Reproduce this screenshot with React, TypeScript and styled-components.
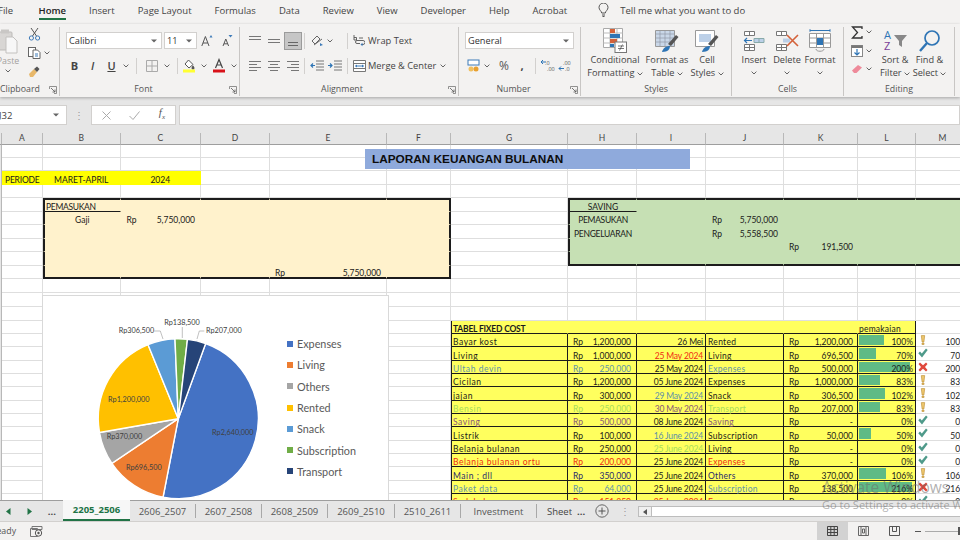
import React from "react"
import styled, { createGlobalStyle } from "styled-components"

const GlobalStyle = createGlobalStyle`
    html, body {
        margin: 0;
        padding: 0;
        background: #f3f2f1;
    }
`

const UI_FONT = `"Open Sans", "Noto Sans", sans-serif`
const CELL_FONT = `Lato, "Open Sans", sans-serif`

/* ---------- icons ---------- */

const Caret = () => (
    <svg width="6" height="4" viewBox="0 0 6 4">
        <path d="M.6.6 3 3 5.4.6" fill="none" stroke="#555" strokeWidth=".9" />
    </svg>
)

const SelectCaret = () => (
    <svg width="6" height="4" viewBox="0 0 6 4">
        <path d="M0 .5h6L3 3.5z" fill="#666" />
    </svg>
)

const Launcher = () => (
    <LauncherBox>
        <svg width="8" height="8" viewBox="0 0 8 8">
            <path d="M.5 3V.5h7v7H5" fill="none" stroke="#777" strokeWidth=".8" />
            <path d="M2 2 6 6M6 3.500V6H3.500" fill="none" stroke="#555" strokeWidth=".8" />
        </svg>
    </LauncherBox>
)

const Lines = ({ rows, active }: { rows: [number, number, number][]; active?: boolean }) => (
    <svg width="14" height="12" viewBox="0 0 14 12">
        {rows.map(([x, y, w], i) => (
            <rect key={i} x={x} y={y} width={w} height="1" fill={active ? "#666" : "#777"} />
        ))}
    </svg>
)

const PasteIcon = () => (
    <svg width="22" height="26" viewBox="0 0 22 26">
        <rect x="1" y="4" width="14" height="18" rx="1" fill="#d8d6d4" stroke="#bdbbb9" />
        <rect x="4" y="1.500" width="8" height="4" fill="#c9c7c5" />
        <path d="M9 9h7l4 4v12H9z" fill="#f7f7f7" stroke="#c3c1bf" />
    </svg>
)

const CutIcon = () => (
    <svg width="13" height="14" viewBox="0 0 13 14">
        <path d="M3 1 8.500 9M10 1 4.500 9" stroke="#555" strokeWidth="1" fill="none" />
        <circle cx="3.400" cy="11" r="2.100" fill="none" stroke="#3d7ab8" />
        <circle cx="9.600" cy="11" r="2.100" fill="none" stroke="#3d7ab8" />
    </svg>
)

const CopyIcon = () => (
    <svg width="13" height="12" viewBox="0 0 13 12">
        <rect x=".5" y=".5" width="7" height="9" fill="#fff" stroke="#666" />
        <path d="M5 3h4.500L12 5.500v6H5z" fill="#fff" stroke="#666" />
        <path d="M7 7h3M7 9h3" stroke="#3d7ab8" />
    </svg>
)

const PainterIcon = () => (
    <svg width="13" height="12" viewBox="0 0 13 12">
        <path d="M1 9 6 4l3 3-4 5H2z" fill="#e8b86a" />
        <path d="M6 4 9 1.500 11.500 4 9 7z" fill="#555" />
    </svg>
)

const BordersIcon = () => (
    <svg width="12" height="12" viewBox="0 0 12 12">
        <path d="M.5.5h11v11H.5zM6 .5v11M.5 6h11" fill="none" stroke="#aaa" />
    </svg>
)

const FillIcon = () => (
    <svg width="14" height="15" viewBox="0 0 14 15">
        <path d="M3 6 6.500 2 11 6.500 7 10z" fill="#fff" stroke="#555" />
        <path d="M11 7.500s1.500 1.500 1.500 2.400a1.500 1.500 0 0 1-3 0c0-.9 1.500-2.400 1.500-2.400" fill="#555" />
        <rect x="1" y="11.500" width="12" height="3" fill="#ffff33" />
    </svg>
)

const FontColorIcon = () => (
    <svg width="14" height="15" viewBox="0 0 14 15">
        <path d="M3.500 10 7 1.500 10.500 10M5 7h4" fill="none" stroke="#444" strokeWidth="1.200" />
        <rect x="1" y="11.500" width="12" height="3" fill="#d8121a" />
    </svg>
)

const GrowIcon = ({ small }: { small?: boolean }) => (
    <svg width="12" height="13" viewBox="0 0 12 13">
        <path
            d={small ? "M2 12 4.800 5l2.800 7M3 9.800h3.600" : "M.8 12 4.400 2.500 8 12M2 9h4.800"}
            fill="none"
            stroke="#555"
            strokeWidth="1"
        />
        <path d={small ? "M7.500 1h4L9.500 3.500z" : "M8.500 3.500h3L10 1z"} fill="#3d7ab8" />
    </svg>
)

const OrientIcon = () => (
    <svg width="14" height="13" viewBox="0 0 14 13">
        <path d="M2 7 7 2l3 3-5 5zM4 11l8-6" fill="none" stroke="#666" />
        <path d="M10 9l3 2-3 1z" fill="#3d7ab8" />
    </svg>
)

const WrapIcon = () => (
    <svg width="12" height="14" viewBox="0 0 12 14">
        <path d="M1 1v5M1 3.500h2.500v2.500H1M6 4h4M7 9.500H4a1.500 1.500 0 0 1 0-3h6a2 2 0 0 1 0 4H9" fill="none" stroke="#555" strokeWidth=".9" />
        <path d="M9.500 8.800v3.400L7.500 10.500z" fill="#3d7ab8" />
    </svg>
)

const MergeIcon = () => (
    <svg width="13" height="12" viewBox="0 0 13 12">
        <path d="M.5.5h12v11H.5zM.5 3.500h12M.5 8.500h12" fill="#fff" stroke="#777" />
        <path d="M2.500 6h8" stroke="#3d7ab8" />
        <path d="M2 6l2-1.500v3zM11 6 9 4.500v3z" fill="#3d7ab8" />
    </svg>
)

const IndentIcon = ({ out }: { out?: boolean }) => (
    <svg width="14" height="12" viewBox="0 0 14 12">
        <path d="M6 1h8M6 4h8M6 7h8M6 10h8" stroke="#777" />
        <path d={out ? "M5 5.500H1M3 3.500l-2 2 2 2" : "M0 5.500h4M2 3.500l2 2-2 2"} fill="none" stroke="#2f75b5" strokeWidth="1.200" />
    </svg>
)

const AccountingIcon = () => (
    <svg width="14" height="13" viewBox="0 0 14 13">
        <rect x="1" y="1" width="11" height="5" fill="#fff" stroke="#3d7ab8" />
        <circle cx="4" cy="10" r="2.500" fill="#f0c060" />
        <circle cx="9" cy="10" r="2.500" fill="#e8a030" />
    </svg>
)

const DecimalIcon = ({ less }: { less?: boolean }) => (
    <svg width="15" height="13" viewBox="0 0 15 13">
        <text x="5" y="5.500" fontSize="5.500" fontFamily="Open Sans" fill="#555">{less ? ".00" : ".0"}</text>
        <text x="7" y="12" fontSize="5.500" fontFamily="Open Sans" fill="#555">{less ? ".0" : ".00"}</text>
        <path d={less ? "M1 9.500h5M3 7.500l-2 2 2 2" : "M6 3H1M3 1 1 3l2 2"} fill="none" stroke="#2f75b5" />
    </svg>
)

const ConditionalIcon = () => (
    <svg width="24" height="25" viewBox="0 0 24 25">
        <path d="M.5.5h19v19H.5z" fill="#fff" stroke="#aaa" />
        <path d="M7 .5v19M14 .5v19M.5 5h19M.5 10h19M.5 15h19" stroke="#bbb" />
        <rect x="7" y="1" width="5" height="4" fill="#d4623a" />
        <rect x="7" y="6" width="10" height="4" fill="#2f75b5" />
        <rect x="7" y="11" width="7" height="4" fill="#d4623a" />
        <rect x="7" y="16" width="4" height="3" fill="#2f75b5" />
        <rect x="12" y="14" width="11.500" height="10.500" fill="#fff" stroke="#777" />
        <path d="M15 18h6M15 20.500h6M19.500 16.500 16.500 22.500" stroke="#555" strokeWidth=".8" fill="none" />
    </svg>
)

const TableStyleIcon = () => (
    <svg width="24" height="24" viewBox="0 0 24 24">
        <path d="M.5 1.500h19v16H.5z" fill="#c9d7e8" stroke="#999" />
        <path d="M.5 5h19M.5 9h19M.5 13h19M5 1.500v16M10 1.500v16M15 1.500v16" stroke="#8f9aa8" strokeWidth=".7" />
        <path d="M13 15 21 6l2.500 2-7.500 9z" fill="#555" />
        <path d="M7 23c1-4 4-6 8-6 0 3-2 6-8 6z" fill="#2f75b5" />
    </svg>
)

const CellStyleIcon = () => (
    <svg width="24" height="24" viewBox="0 0 24 24">
        <path d="M.5 1.500h19v16H.5z" fill="#fff" stroke="#999" />
        <rect x="4" y="5" width="12" height="8" fill="#bcd0e8" />
        <path d="M13 15 21 6l2.500 2-7.500 9z" fill="#555" />
        <path d="M7 23c1-4 4-6 8-6 0 3-2 6-8 6z" fill="#2f75b5" />
    </svg>
)

const InsertIcon = () => (
    <svg width="22" height="22" viewBox="0 0 22 22">
        <path d="M1.500 1.500h10v4h-10zM6.500 1.500v4M1.500 14.500h10v6h-10zM1.500 17.500h10M6.500 14.500v6" fill="#fff" stroke="#777" />
        <path d="M11 8.500h10v4H11zM16 8.500v4" fill="#bcd0e8" stroke="#8aa" />
        <path d="M1 10.500h8M4 8 1.500 10.500 4 13" fill="none" stroke="#2f75b5" strokeWidth="1.200" />
    </svg>
)

const DeleteIcon = () => (
    <svg width="24" height="22" viewBox="0 0 24 22">
        <path d="M1.500 1.500h10v4h-10zM6.500 1.500v4M1.500 14.500h10v6h-10zM1.500 17.500h10M6.500 14.500v6" fill="#fff" stroke="#777" />
        <rect x="8" y="8.500" width="7" height="4" fill="#bcd0e8" />
        <path d="M12 5 23 16M23 5 12 16" stroke="#d4623a" strokeWidth="1.600" />
    </svg>
)

const FormatIcon = () => (
    <svg width="22" height="24" viewBox="0 0 22 24">
        <path d="M.5 4.500h21v14H.5zM7.500 4.500v14M14.500 4.500v14M.5 9h21M.5 14h21" fill="#fff" stroke="#999" />
        <rect x="8" y="9" width="6" height="7" fill="#2f75b5" />
        <path d="M1 1.500h20M1 .2v2.600M21 .2v2.600" stroke="#2f75b5" />
        <path d="M7 20c0 3 8 3 8 0" fill="none" stroke="#999" />
    </svg>
)

const SigmaIcon = () => (
    <svg width="12" height="13" viewBox="0 0 12 13">
        <path d="M11 3V1H1.500L6.500 6.500 1.500 12H11v-2" fill="none" stroke="#333" strokeWidth="1.300" />
    </svg>
)

const FillDownIcon = () => (
    <svg width="12" height="12" viewBox="0 0 12 12">
        <rect x=".5" y=".5" width="11" height="11" fill="#fff" stroke="#888" />
        <rect x=".5" y=".5" width="11" height="2.500" fill="#777" />
        <path d="M6 4v6M3.500 7.500 6 10l2.500-2.500" fill="none" stroke="#2f75b5" strokeWidth="1.200" />
    </svg>
)

const EraserIcon = () => (
    <svg width="12" height="10" viewBox="0 0 12 10">
        <path d="M1 6.500 7 1l4 2.500-5.500 5.500H3z" fill="#ee8a9a" />
    </svg>
)

const SortIcon = () => (
    <svg width="25" height="24" viewBox="0 0 25 24">
        <text x="1" y="10" fontSize="11" fontFamily="Open Sans" fill="#2f75b5">A</text>
        <text x="1" y="21" fontSize="11" fontFamily="Open Sans" fill="#7a3f98">Z</text>
        <path d="M11 6h13l-5 6v6l-3-2v-4z" fill="#888" />
    </svg>
)

const FindIcon = () => (
    <svg width="23" height="24" viewBox="0 0 23 24">
        <circle cx="14" cy="9" r="7" fill="none" stroke="#2f75b5" strokeWidth="1.700" />
        <path d="M9 14 2 22" stroke="#2f75b5" strokeWidth="2.400" />
    </svg>
)

const BulbIcon = () => (
    <svg width="11" height="14" viewBox="0 0 11 14">
        <path d="M3.700 10C3.500 8 1 7 1 4.500a4.500 4.500 0 0 1 9 0C10 7 7.500 8 7.300 10zM4 12h3M4.500 13.500h2" fill="none" stroke="#555" />
    </svg>
)

const MacroIcon = () => (
    <svg width="13" height="11" viewBox="0 0 13 11">
        <path d="M.5 2.500h7v8h-7zM2 .5h10v3H2z" fill="#f3f2f1" stroke="#777" />
        <circle cx="8.500" cy="7" r="3.200" fill="#f3f2f1" stroke="#555" />
        <circle cx="8.500" cy="7" r="1.200" fill="#555" />
    </svg>
)

const StatusMark = ({ kind }: { kind: Mark }) => (
    <svg width="10" height="10" viewBox="0 0 10 10">
        {kind === "warn" && <path d="M3.300.6h3.400L5.900 7H4.100zM4 8h2v1.600H4z" fill="#eec76f" stroke="#b98a2e" strokeWidth=".6" />}
        {kind === "ok" && <path d="M.3 5.200 2 3.500l1.800 1.900L8 .6 9.700 2 4 9.400z" fill="#4f9a8a" />}
        {kind === "bad" && <path d="M.5 2 2 .5l3 2.700L8 .5 9.500 2 7 5l2.500 3L8 9.500 5 6.800 2 9.500.5 8 3 5z" fill="#e0483c" />}
    </svg>
)

/* ---------- data ---------- */

type Mark = "ok" | "warn" | "bad"

const BLUE = "#5f95a8"
const GREEN = "#a5dd5c"
const PURPLE = "#86557a"
const RED = "#f02a12"
const NAVY = "#2a2a6a"
const DATE_BLUE = "#5e8fa6"

const fixedCost: {
    name: string
    color?: string
    amount: string
    date: string
    dateColor?: string
    category: string
    spent: string
    pct: number
    bar: number
    mark: Mark
}[] = [
    { name: "Bayar kost", amount: "1,200,000", date: "26  Mei", category: "Rented", spent: "1,200,000", pct: 100, bar: 25, mark: "warn" },
    { name: "Living", amount: "1,000,000", date: "25 May 2024", dateColor: RED, category: "Living", spent: "696,500", pct: 70, bar: 17, mark: "ok" },
    { name: "Ultah devin", color: BLUE, amount: "250,000", date: "25 May 2024", category: "Expenses", spent: "500,000", pct: 200, bar: 51, mark: "bad" },
    { name: "Cicilan", amount: "1,200,000", date: "05 June 2024", category: "Expenses", spent: "1,000,000", pct: 83, bar: 21, mark: "warn" },
    { name: "jajan", amount: "300,000", date: "29 May 2024", dateColor: DATE_BLUE, category: "Snack", spent: "306,500", pct: 102, bar: 26, mark: "warn" },
    { name: "Bensin", color: GREEN, amount: "250,000", date: "30 May 2024", dateColor: PURPLE, category: "Transport", spent: "207,000", pct: 83, bar: 21, mark: "warn" },
    { name: "Saving", color: PURPLE, amount: "500,000", date: "08 June 2024", category: "Saving", spent: "-", pct: 0, bar: 0, mark: "ok" },
    { name: "Listrik", amount: "100,000", date: "16 June 2024", dateColor: DATE_BLUE, category: "Subscription", spent: "50,000", pct: 50, bar: 12, mark: "ok" },
    { name: "Belanja bulanan", amount: "250,000", date: "25 June 2024", dateColor: GREEN, category: "Living", spent: "-", pct: 0, bar: 0, mark: "ok" },
    { name: "Belanja bulanan ortu", color: RED, amount: "200,000", date: "25 June 2024", category: "Expenses", spent: "-", pct: 0, bar: 0, mark: "ok" },
    { name: "Main ; dll", color: NAVY, amount: "350,000", date: "25 June 2024", category: "Others", spent: "370,000", pct: 106, bar: 27, mark: "warn" },
    { name: "Paket data", color: BLUE, amount: "64,000", date: "25 June 2024", category: "Subscription", spent: "138,500", pct: 216, bar: 53, mark: "bad" },
    { name: "Sedekah", color: RED, amount: "151,350", date: "25 June 2024", dateColor: RED, category: "Expenses", spent: "-", pct: 0, bar: 0, mark: "ok" },
]

const pieData = [
    { name: "Expenses", value: 2640000, color: "#4472c4" },
    { name: "Living", value: 696500, color: "#ed7d31" },
    { name: "Others", value: 370000, color: "#a5a5a5" },
    { name: "Rented", value: 1200000, color: "#ffc000" },
    { name: "Snack", value: 306500, color: "#5b9bd5" },
    { name: "Subscription", value: 138500, color: "#70ad47" },
    { name: "Transport", value: 207000, color: "#264478" },
]

const pieLabels = [
    { text: "Rp2,640,000", x: 189.8, y: 136.7 },
    { text: "Rp696,500", x: 100.8, y: 172.3 },
    { text: "Rp370,000", x: 81.5, y: 141.3 },
    { text: "Rp1,200,000", x: 85.8, y: 104.3 },
    { text: "Rp306,500", x: 93.5, y: 34.7 },
    { text: "Rp138,500", x: 139, y: 26.7 },
    { text: "Rp207,000", x: 180.8, y: 34.7 },
]

const columns: [string, number][] = [
    ["", 2], ["A", 41], ["B", 77.5], ["C", 80.5], ["D", 69], ["E", 117], ["F", 64],
    ["G", 117], ["H", 69], ["I", 69], ["J", 78], ["K", 74], ["L", 58], ["M", 54],
]
const columnTemplate = columns.map(([, w]) => `${w}px`).join(" ")

const rowHeights = [
    13, ...Array(9).fill(13.44), 14, 14, 14, 13, ...Array(13).fill(13.33),
]

/* ---------- spreadsheet model ---------- */

interface CellSpec {
    text?: string
    rp?: string
    align?: "left" | "center" | "right"
    color?: string
    bold?: boolean
    fill?: string
    top?: string
    right?: string
    bottom?: string
    left?: string
    pad?: string
    spacing?: number
    bar?: number
    mark?: Mark
}

const THICK = "2px solid #1c1c1c"
const THIN = "1px solid #1c1c1c"
const NONE = "1px solid transparent"
const TABLE_YELLOW = "#ffff5e"

const buildCells = () => {
    const cells: Record<string, CellSpec> = {}
    const letters = columns.map(([c]) => c)
    const put = (key: string, spec: CellSpec) => {
        cells[key] = { ...cells[key], ...spec }
    }

    const box = (from: string, to: string, r0: number, r1: number, fill: string) => {
        const a = letters.indexOf(from)
        const b = letters.indexOf(to)
        for (let r = r0; r <= r1; r++) {
            for (let c = a; c <= b; c++) {
                put(`${letters[c]}${r}`, {
                    fill,
                    right: c === b ? THICK : NONE,
                    bottom: r === r1 ? THICK : NONE,
                    top: r === r0 ? THICK : undefined,
                    left: c === a ? THICK : undefined,
                })
            }
        }
    }

    for (const c of ["A", "B", "C"]) put(`${c}2`, { fill: "#ffff00", right: NONE, bottom: NONE })
    put("A2", { text: "PERIODE", pad: "0 0 0 3px", spacing: -0.2 })
    put("B2", { text: "MARET-APRIL", align: "center" })
    put("C2", { text: "2024", align: "center" })

    box("B", "F", 4, 9, "#fff2cc")
    put("B4", { text: "PEMASUKAN", bottom: THIN, pad: "0 0 0 1px", spacing: -0.3 })
    put("B5", { text: "Gaji", align: "center" })
    put("C5", { rp: "5,750,000", pad: "0 5px 0 6px" })
    put("E9", { rp: "5,750,000", pad: "0 5px 0 5px" })

    box("H", "M", 4, 8, "#c6e0b4")
    put("H4", { text: "SAVING", align: "center", bottom: THIN })
    put("H5", { text: "PEMASUKAN", align: "center", spacing: -0.3 })
    put("H6", { text: "PENGELUARAN", align: "center", spacing: -0.3 })
    put("J5", { rp: "5,750,000", pad: "0 5px 0 6px" })
    put("J6", { rp: "5,558,500", pad: "0 5px 0 6px" })
    put("K7", { rp: "191,500", pad: "0 4px 0 5px" })

    const head = { fill: TABLE_YELLOW, bottom: THIN, right: NONE }
    for (const c of ["G", "H", "I", "J", "K", "L"]) put(`${c}13`, head)
    put("G13", { text: "TABEL FIXED COST", bold: true, left: THIN, pad: "0 0 0 1px", spacing: -0.2 })
    put("L13", { text: "pemakaian", pad: "0 0 0 1px", spacing: 0.2 })
    put("L13", { right: THIN })

    fixedCost.forEach((row, i) => {
        const r = 14 + i
        const base = { fill: TABLE_YELLOW, bottom: THIN, right: THIN }
        put(`G${r}`, { ...base, left: THIN, text: row.name, color: row.color, pad: "0 0 0 1px", spacing: 0.55 })
        put(`H${r}`, { ...base, rp: row.amount, color: row.color, pad: "0 5px 0 5px" })
        put(`I${r}`, { ...base, text: row.date, color: row.dateColor, align: "right", pad: "0 2px 0 0", spacing: -0.15 })
        put(`J${r}`, { ...base, text: row.category, color: row.color, pad: "0 0 0 2px", spacing: 0.3 })
        put(`K${r}`, { ...base, rp: row.spent, pad: "0 4px 0 5px" })
        put(`L${r}`, { ...base, text: `${row.pct}%`, align: "right", pad: "0 2px 0 0", bar: row.bar })
        put(`M${r}`, { text: `${row.pct}%`, align: "right", mark: row.mark, pad: "0 2px 0 2px" })
    })

    return cells
}

const cells = buildCells()

const polar = (deg: number, r: number): [number, number] => {
    const a = ((deg - 90) * Math.PI) / 180
    return [135.3 + r * Math.cos(a), 122.7 + r * Math.sin(a)]
}

const buildSlices = () => {
    const total = pieData.reduce((s, d) => s + d.value, 0)
    let angle = 20
    return pieData.map((d) => {
        const sweep = (d.value / total) * 360
        const [x0, y0] = polar(angle, 80)
        const [x1, y1] = polar(angle + sweep, 80)
        angle += sweep
        return {
            ...d,
            path: `M135.3 122.7L${x0} ${y0}A80 80 0 ${sweep > 180 ? 1 : 0} 1 ${x1} ${y1}Z`,
        }
    })
}

/* ---------- page ---------- */

const App: React.FC = () => (
    <Page>
        <GlobalStyle />
        <MenuBar>
            <MenuItem>File</MenuItem>
            <MenuItem $active>Home</MenuItem>
            {["Insert", "Page Layout", "Formulas", "Data", "Review", "View", "Developer", "Help", "Acrobat"].map((m) => (
                <MenuItem key={m}>{m}</MenuItem>
            ))}
            <TellMe>
                <BulbIcon />
                <span>Tell me what you want to do</span>
            </TellMe>
        </MenuBar>

        <Ribbon>
            <Group $w={60}>
                <ClipboardBody>
                    <PasteColumn>
                        <PasteIcon />
                        <span>Paste</span>
                        <Caret />
                    </PasteColumn>
                    <SmallColumn>
                        <CutIcon />
                        <SmallTool>
                            <CopyIcon />
                            <Caret />
                        </SmallTool>
                        <PainterIcon />
                    </SmallColumn>
                </ClipboardBody>
                <GroupLabel $pr={27}>Clipboard</GroupLabel>
                <Launcher />
            </Group>

            <Group $w={180}>
                <ToolBody $pl={6}>
                    <ToolRow>
                        <SelectBox $w={96}>
                            Calibri
                            <SelectCaret />
                        </SelectBox>
                        <SelectBox $w={33} $ml={2}>
                            11
                            <SelectCaret />
                        </SelectBox>
                        <Tool $w={20}><GrowIcon /></Tool>
                        <Tool $w={20}><GrowIcon small /></Tool>
                    </ToolRow>
                    <ToolRow>
                        <Tool $w={17}><Bold>B</Bold></Tool>
                        <Tool $w={19}><Italic>I</Italic></Tool>
                        <Tool $w={19}><Under>U</Under></Tool>
                        <Tool $w={10}><Caret /></Tool>
                        <Sep $ml={5} />
                        <Tool $w={20} $ml={5}><BordersIcon /></Tool>
                        <Tool $w={10}><Caret /></Tool>
                        <Sep $ml={5} />
                        <Tool $w={22}><FillIcon /></Tool>
                        <Tool $w={8}><Caret /></Tool>
                        <Tool $w={22}><FontColorIcon /></Tool>
                        <Tool $w={8}><Caret /></Tool>
                    </ToolRow>
                </ToolBody>
                <GroupLabel $pr={12}>Font</GroupLabel>
                <Launcher />
            </Group>

            <Group $w={219}>
                <ToolBody $pl={6}>
                    <ToolRow>
                        <Tool $w={18}><Lines rows={[[1, 1, 12], [1, 4, 12]]} /></Tool>
                        <Tool $w={19}><Lines rows={[[1, 4, 12], [1, 7, 12]]} /></Tool>
                        <Tool $w={18} $ml={1} $active><Lines rows={[[2, 7, 10], [2, 10, 10]]} active /></Tool>
                        <Sep $ml={2} />
                        <Tool $w={18} $ml={3}><OrientIcon /></Tool>
                        <Tool $w={8}><Caret /></Tool>
                        <Sep $ml={13} />
                        <Tool $w={16} $ml={3}><WrapIcon /></Tool>
                        <ToolText>Wrap Text</ToolText>
                    </ToolRow>
                    <ToolRow>
                        <Tool $w={18}><Lines rows={[[1, 1, 12], [1, 4, 8], [1, 7, 12], [1, 10, 8]]} /></Tool>
                        <Tool $w={19}><Lines rows={[[1, 1, 12], [3, 4, 8], [1, 7, 12], [3, 10, 8]]} /></Tool>
                        <Tool $w={18} $ml={1}><Lines rows={[[1, 1, 12], [5, 4, 8], [1, 7, 12], [5, 10, 8]]} /></Tool>
                        <Sep $ml={2} />
                        <Tool $w={18} $ml={3}><IndentIcon out /></Tool>
                        <Tool $w={18}><IndentIcon /></Tool>
                        <Sep $ml={3} />
                        <Tool $w={16} $ml={3}><MergeIcon /></Tool>
                        <ToolText>Merge &amp; Center</ToolText>
                        <Tool $w={8} $ml={3}><Caret /></Tool>
                    </ToolRow>
                </ToolBody>
                <GroupLabel $pr={14}>Alignment</GroupLabel>
                <Launcher />
            </Group>

            <Group $w={122}>
                <ToolBody $pl={6}>
                    <ToolRow>
                        <SelectBox $w={109}>
                            General
                            <SelectCaret />
                        </SelectBox>
                    </ToolRow>
                    <ToolRow>
                        <Tool $w={18}><AccountingIcon /></Tool>
                        <Tool $w={8}><Caret /></Tool>
                        <Tool $w={18} $ml={4}><Glyph>%</Glyph></Tool>
                        <Tool $w={18}><Bold>,</Bold></Tool>
                        <Sep $ml={4} />
                        <Tool $w={18} $ml={2}><DecimalIcon /></Tool>
                        <Tool $w={18}><DecimalIcon less /></Tool>
                    </ToolRow>
                </ToolBody>
                <GroupLabel $pr={12}>Number</GroupLabel>
                <Launcher />
            </Group>

            <Group $w={151}>
                <LargeBody $pl={7}>
                    <LargeButton $w={54}>
                        <IconSlot><ConditionalIcon /></IconSlot>
                        <span>Conditional</span>
                        <span>Formatting <Caret /></span>
                    </LargeButton>
                    <LargeButton $w={40} $ml={5}>
                        <IconSlot><TableStyleIcon /></IconSlot>
                        <span>Format as</span>
                        <span>Table <Caret /></span>
                    </LargeButton>
                    <LargeButton $w={32} $ml={4}>
                        <IconSlot><CellStyleIcon /></IconSlot>
                        <span>Cell</span>
                        <span>Styles <Caret /></span>
                    </LargeButton>
                </LargeBody>
                <GroupLabel>Styles</GroupLabel>
            </Group>

            <Group $w={112}>
                <LargeBody $pl={10}>
                    <LargeButton $w={24}>
                        <IconSlot><InsertIcon /></IconSlot>
                        <span>Insert</span>
                        <Caret />
                    </LargeButton>
                    <LargeButton $w={26} $ml={8}>
                        <IconSlot><DeleteIcon /></IconSlot>
                        <span>Delete</span>
                        <Caret />
                    </LargeButton>
                    <LargeButton $w={30} $ml={5}>
                        <IconSlot><FormatIcon /></IconSlot>
                        <span>Format</span>
                        <Caret />
                    </LargeButton>
                </LargeBody>
                <GroupLabel>Cells</GroupLabel>
            </Group>

            <Group $w={111}>
                <LargeBody $pl={7}>
                    <EditColumn>
                        <SmallTool><SigmaIcon /><Caret /></SmallTool>
                        <SmallTool><FillDownIcon /><Caret /></SmallTool>
                        <SmallTool><EraserIcon /><Caret /></SmallTool>
                    </EditColumn>
                    <LargeButton $w={28} $ml={4}>
                        <IconSlot><SortIcon /></IconSlot>
                        <span>Sort &amp;</span>
                        <span>Filter <Caret /></span>
                    </LargeButton>
                    <LargeButton $w={31} $ml={5}>
                        <IconSlot><FindIcon /></IconSlot>
                        <span>Find &amp;</span>
                        <span>Select <Caret /></span>
                    </LargeButton>
                </LargeBody>
                <GroupLabel>Editing</GroupLabel>
            </Group>
        </Ribbon>

        <FormulaBar>
            <NameBox>
                <NameText>J32</NameText>
                <SelectCaret />
            </NameBox>
            <BarDots>⋮</BarDots>
            <FormulaButtons>
                <svg width="9" height="9" viewBox="0 0 9 9"><path d="M.5.5l8 8M8.500.5l-8 8" stroke="#aaa" /></svg>
                <svg width="11" height="9" viewBox="0 0 11 9"><path d="M.5 5 4 8.500 10.500.5" fill="none" stroke="#aaa" /></svg>
                <FxText>f<sub>x</sub></FxText>
            </FormulaButtons>
            <FormulaInput />
        </FormulaBar>

        <ColumnHeaders>
            {columns.map(([c], i) => (
                <ColumnHeader key={i}>{c}</ColumnHeader>
            ))}
        </ColumnHeaders>

        <SheetArea>
            <Sheet>
                {rowHeights.map((_, r) =>
                    columns.map(([c], i) => {
                        const spec = cells[`${c}${r}`] || {}
                        return i === 0 ? (
                            <Gutter key={`${r}-${i}`} />
                        ) : (
                            <Cell
                                key={`${r}-${i}`}
                                $align={spec.align}
                                $color={spec.color}
                                $bold={spec.bold}
                                $fill={spec.fill}
                                $top={spec.top}
                                $right={spec.right}
                                $bottom={spec.bottom}
                                $left={spec.left}
                                $pad={spec.pad}
                                $spacing={spec.spacing}
                            >
                                {spec.bar ? <DataBar style={{ width: spec.bar }} /> : null}
                                {spec.mark ? <MarkSlot><StatusMark kind={spec.mark} /></MarkSlot> : null}
                                {spec.rp ? (
                                    <>
                                        <span>Rp</span>
                                        <span>{spec.rp}</span>
                                    </>
                                ) : (
                                    <CellText>{spec.text}</CellText>
                                )}
                            </Cell>
                        )
                    })
                )}
            </Sheet>

            <TitleBanner>LAPORAN KEUANGAN BULANAN</TitleBanner>

            <ChartPanel>
                <svg width="240" height="205" viewBox="0 0 240 205">
                    {buildSlices().map((s) => (
                        <path key={s.name} d={s.path} fill={s.color} stroke="#fff" strokeWidth="1.4" />
                    ))}
                    <path d="M111.300 35h6l2.700 8M139.300 31v11M161.300 35h-5l-2.300 8" fill="none" stroke="#a6a6a6" strokeWidth=".7" />
                    {pieLabels.map((l) => (
                        <PieLabel key={l.text} x={l.x} y={l.y} textAnchor="middle" dominantBaseline="middle">
                            {l.text}
                        </PieLabel>
                    ))}
                </svg>
                <Legend>
                    {pieData.map((d) => (
                        <LegendItem key={d.name}>
                            <LegendSwatch $color={d.color} />
                            {d.name}
                        </LegendItem>
                    ))}
                </Legend>
            </ChartPanel>
        </SheetArea>

        <TabStrip>
            <TabNav>
                <svg width="5" height="7" viewBox="0 0 5 7"><path d="M4.500 0v7L0 3.500z" fill="#217346" /></svg>
                <svg width="5" height="7" viewBox="0 0 5 7"><path d="M.5 0v7L5 3.500z" fill="#217346" /></svg>
                <span>...</span>
            </TabNav>
            <SheetTab $active $w={67}>2205_2506</SheetTab>
            <SheetTab $w={66}>2606_2507</SheetTab>
            <SheetTab $w={66}>2607_2508</SheetTab>
            <SheetTab $w={66}>2608_2509</SheetTab>
            <SheetTab $w={67}>2609_2510</SheetTab>
            <SheetTab $w={66}>2510_2611</SheetTab>
            <SheetTab $w={76}>Investment</SheetTab>
            <ClippedTab>Sheet1</ClippedTab>
            <TabMore>...</TabMore>
            <AddSheet>
                <svg width="14" height="14" viewBox="0 0 14 14">
                    <circle cx="7" cy="7" r="6.200" fill="none" stroke="#666" />
                    <path d="M7 3.500v7M3.500 7h7" stroke="#555" />
                </svg>
            </AddSheet>
            <TabDots>⋮</TabDots>
            <ScrollBar>
                <ScrollButton>
                    <svg width="4" height="6" viewBox="0 0 4 6"><path d="M4 0v6L0 3z" fill="#555" /></svg>
                </ScrollButton>
            </ScrollBar>
        </TabStrip>

        <StatusBar>
            <ReadyText>Ready</ReadyText>
            <MacroSlot><MacroIcon /></MacroSlot>
            <ViewButtons>
                <ViewButton $active>
                    <svg width="11" height="10" viewBox="0 0 11 10">
                        <path d="M.5.5h10v9H.5zM.5 3.500h10M.5 6.500h10M3.800.5v9M7.200.5v9" fill="none" stroke="#444" />
                    </svg>
                </ViewButton>
                <ViewButton>
                    <svg width="11" height="10" viewBox="0 0 11 10">
                        <path d="M.5.5h10v9H.5zM3 .5v9M8 .5v9M4.500 3h2v4h-2z" fill="none" stroke="#666" />
                    </svg>
                </ViewButton>
                <ViewButton>
                    <svg width="11" height="10" viewBox="0 0 11 10">
                        <path d="M.5.5h10v9H.5zM3.500.5v5h4v-5" fill="none" stroke="#555" />
                    </svg>
                </ViewButton>
            </ViewButtons>
            <ZoomSlider>
                <ZoomMinus />
                <ZoomTrack />
                <ZoomThumb />
            </ZoomSlider>
        </StatusBar>

        <Watermark>
            <WatermarkTitle>Activate Windows</WatermarkTitle>
            <WatermarkLine>Go to Settings to activate Windows.</WatermarkLine>
        </Watermark>
    </Page>
)

/* ---------- styles ---------- */

const Page = styled.div`
    position: relative;
    width: 960px;
    height: 540px;
    overflow: hidden;
    display: flex;
    flex-direction: column;
    background: #f3f2f1;
    font-family: ${UI_FONT};
    color: #444;
`

const MenuBar = styled.nav`
    height: 24px;
    flex: none;
    display: flex;
    align-items: flex-start;
    gap: 23px;
    font-size: 9.5px;
`

const MenuItem = styled.div<{ $active?: boolean }>`
    padding-top: 4px;
    height: 14px;
    line-height: 13px;
    white-space: nowrap;
    color: ${({ $active }) => ($active ? "#222" : "#444")};
    font-weight: ${({ $active }) => ($active ? 600 : 400)};
    border-bottom: ${({ $active }) => ($active ? "2.5px solid #217346" : "none")};

    &:first-child {
        margin-left: -2px;
        margin-right: 2.5px;
    }
`

const TellMe = styled.div`
    display: flex;
    align-items: center;
    gap: 11px;
    margin-left: 8px;
    padding-top: 3px;
    white-space: nowrap;
`

const Ribbon = styled.div`
    height: 73px;
    flex: none;
    display: flex;
    position: relative;
    z-index: 2;
    background: #f3f2f1;
    box-shadow: 0 1px 3px rgba(0, 0, 0, 0.28);
`

const Group = styled.section<{ $w: number }>`
    position: relative;
    flex: none;
    width: ${({ $w }) => $w}px;
    margin: 3px 0 1px;
    display: flex;
    flex-direction: column;
    border-right: 1px solid #c8c6c4;
    box-sizing: border-box;
`

const GroupLabel = styled.div<{ $pr?: number }>`
    height: 13px;
    line-height: 13px;
    text-align: center;
    font-size: 8.8px;
    color: #555;
    padding-right: ${({ $pr }) => $pr || 0}px;
    white-space: nowrap;
`

const LauncherBox = styled.div`
    position: absolute;
    right: 2px;
    bottom: 2px;
    width: 8px;
    height: 8px;
    line-height: 0;
`

const ClipboardBody = styled.div`
    flex: 1;
    display: flex;
    margin-left: -4px;
`

const PasteColumn = styled.div`
    width: 24px;
    display: flex;
    flex-direction: column;
    align-items: center;
    padding-top: 1px;
    font-size: 8.8px;
    color: #a3a1a0;
    line-height: 13px;
    gap: 1px;
`

const SmallColumn = styled.div`
    margin-left: 8px;
    display: flex;
    flex-direction: column;
    align-items: flex-start;
    gap: 4px;
`

const SmallTool = styled.div`
    display: flex;
    align-items: center;
    gap: 3px;
    height: 16px;
`

const ToolBody = styled.div<{ $pl: number }>`
    flex: 1;
    display: flex;
    flex-direction: column;
    gap: 7px;
    padding: 4.5px 0 0 ${({ $pl }) => $pl}px;
`

const ToolRow = styled.div`
    display: flex;
    align-items: center;
    height: 18px;
`

const SelectBox = styled.div<{ $w: number; $ml?: number }>`
    box-sizing: border-box;
    width: ${({ $w }) => $w}px;
    margin-left: ${({ $ml }) => $ml || 0}px;
    height: 17px;
    flex: none;
    display: flex;
    align-items: center;
    justify-content: space-between;
    padding: 0 4px 0 2px;
    background: #fff;
    border: 1px solid #d2d0ce;
    font-size: 9.2px;
    color: #333;
`

const Tool = styled.div<{ $w: number; $ml?: number; $active?: boolean }>`
    box-sizing: border-box;
    flex: none;
    width: ${({ $w }) => $w}px;
    margin-left: ${({ $ml }) => $ml || 0}px;
    height: 18px;
    display: flex;
    align-items: center;
    justify-content: center;
    background: ${({ $active }) => ($active ? "#c6c6c6" : "transparent")};
    border: ${({ $active }) => ($active ? "1px solid #9b9b9b" : "none")};
`

const Sep = styled.div<{ $ml?: number }>`
    flex: none;
    width: 1px;
    height: 16px;
    margin-left: ${({ $ml }) => $ml || 0}px;
    background: #d2d0ce;
`

const ToolText = styled.span`
    margin-left: 1px;
    font-size: 9.3px;
    white-space: nowrap;
`

const Bold = styled.span`
    font-weight: 700;
    font-size: 11px;
    color: #444;
`

const Italic = styled.span`
    font-style: italic;
    font-weight: 600;
    font-size: 11px;
`

const Under = styled.span`
    font-weight: 600;
    font-size: 11px;
    text-decoration: underline;
`

const Glyph = styled.span`
    font-size: 12px;
    color: #555;
`

const LargeBody = styled.div<{ $pl: number }>`
    flex: 1;
    display: flex;
    padding-left: ${({ $pl }) => $pl}px;
`

const LargeButton = styled.div<{ $w: number; $ml?: number }>`
    flex: none;
    width: ${({ $w }) => $w}px;
    margin-left: ${({ $ml }) => $ml || 0}px;
    display: flex;
    flex-direction: column;
    align-items: center;
    font-size: 9.2px;
    line-height: 12.5px;
    white-space: nowrap;

    > svg {
        margin-top: 4px;
    }
`

const IconSlot = styled.div`
    height: 27px;
    display: flex;
    align-items: center;
    justify-content: center;
`

const EditColumn = styled.div`
    width: 26px;
    flex: none;
    display: flex;
    flex-direction: column;
    margin-top: -3px;
    gap: 2.5px;
`

const FormulaBar = styled.div`
    height: 36px;
    flex: none;
    box-sizing: border-box;
    display: flex;
    align-items: flex-start;
    padding-top: 8px;
    background: #e6e6e6;
`

const NameBox = styled.div`
    box-sizing: border-box;
    width: 68px;
    height: 20px;
    margin-left: -1px;
    display: flex;
    align-items: center;
    justify-content: space-between;
    padding: 0 7px 0 0;
    background: #fff;
    border: 1px solid #d2d0ce;
    font-size: 9.5px;
`

const NameText = styled.span`
    margin-left: -1px;
`

const BarDots = styled.span`
    flex: none;
    width: 24px;
    text-align: center;
    font-size: 10px;
    line-height: 20px;
    color: #999;
`

const TabDots = styled(BarDots)`
    margin-left: 4px;
`

const FormulaButtons = styled.div`
    box-sizing: border-box;
    width: 85px;
    height: 20px;
    display: flex;
    align-items: center;
    justify-content: space-between;
    padding: 0 10px;
    background: #fff;
    border: 1px solid #d2d0ce;
`

const FxText = styled.span`
    font-family: "Liberation Serif", serif;
    font-style: italic;
    font-size: 11px;
    color: #555;
    line-height: 12px;

    sub {
        font-size: 7px;
    }
`

const FormulaInput = styled.div`
    box-sizing: border-box;
    flex: 1;
    height: 20px;
    margin-left: 3px;
    background: #fff;
    border: 1px solid #d2d0ce;
`

const ColumnHeaders = styled.div`
    height: 12px;
    flex: none;
    display: grid;
    grid-template-columns: ${columnTemplate};
    background: #e6e6e6;
`

const ColumnHeader = styled.div`
    box-sizing: border-box;
    text-align: center;
    font-family: ${CELL_FONT};
    font-size: 8.5px;
    line-height: 11px;
    color: #444;
    border-right: 1px solid #b8b8b8;
    border-bottom: 1px solid #9e9e9e;
`

const SheetArea = styled.div`
    position: relative;
    flex: none;
    height: 355px;
    overflow: hidden;
    background: #fff;
`

const Sheet = styled.div`
    display: grid;
    grid-template-columns: ${columnTemplate};
    grid-template-rows: ${rowHeights.map((h) => `${h}px`).join(" ")};
    font-family: ${CELL_FONT};
    font-size: 8.5px;
    line-height: 7px;
    color: #1a1a1a;
`

const Gutter = styled.div`
    background: #e6e6e6;
    border-right: 1px solid #b8b8b8;
    box-sizing: border-box;
`

const alignMap = { left: "flex-start", center: "center", right: "flex-end" }

const Cell = styled.div<{
    $align?: "left" | "center" | "right"
    $color?: string
    $bold?: boolean
    $fill?: string
    $top?: string
    $right?: string
    $bottom?: string
    $left?: string
    $pad?: string
    $spacing?: number
}>`
    position: relative;
    box-sizing: border-box;
    min-width: 0;
    display: flex;
    align-items: flex-end;
    justify-content: ${({ $align }) => ($align ? alignMap[$align] : "space-between")};
    padding: ${({ $pad }) => $pad || "0"};
    white-space: nowrap;
    letter-spacing: ${({ $spacing }) => $spacing || 0}px;
    color: ${({ $color }) => $color || "#1a1a1a"};
    font-weight: ${({ $bold }) => ($bold ? 700 : 400)};
    background: ${({ $fill }) => $fill || "#fff"};
    border-top: ${({ $top }) => $top || "none"};
    border-left: ${({ $left }) => $left || "none"};
    border-right: ${({ $right }) => $right || "1px solid #dedede"};
    border-bottom: ${({ $bottom }) => $bottom || "1px solid #dedede"};
`

const CellText = styled.span`
    position: relative;
`

const DataBar = styled.div`
    position: absolute;
    left: 1px;
    top: 1px;
    bottom: 1px;
    background: #5fbb85;
`

const MarkSlot = styled.span`
    position: absolute;
    left: 2px;
    top: 1px;
    line-height: 0;
`

const TitleBanner = styled.div`
    position: absolute;
    left: 365px;
    top: 4px;
    width: 325px;
    height: 19.5px;
    box-sizing: border-box;
    padding-left: 7px;
    background: #8faadc;
    font-family: "Liberation Sans", Arial, sans-serif;
    font-weight: 700;
    font-size: 11.8px;
    line-height: 20.5px;
    color: #0d0d0d;
`

const ChartPanel = styled.div`
    position: absolute;
    left: 42px;
    top: 150px;
    width: 347px;
    height: 215px;
    box-sizing: border-box;
    display: flex;
    background: #fff;
    border: 1px solid #d9d9d9;
`

const PieLabel = styled.text`
    font-family: ${CELL_FONT};
    font-size: 7.3px;
    fill: #404040;
`

const Legend = styled.div`
    margin-left: 4px;
    padding-top: 37px;
    display: flex;
    flex-direction: column;
`

const LegendItem = styled.div`
    height: 21.3px;
    display: flex;
    align-items: center;
    gap: 4px;
    font-family: ${CELL_FONT};
    font-size: 10.8px;
    color: #595959;
`

const LegendSwatch = styled.span<{ $color: string }>`
    width: 6px;
    height: 6px;
    background: ${({ $color }) => $color};
`

const TabStrip = styled.div`
    height: 22px;
    flex: none;
    position: relative;
    z-index: 1;
    box-sizing: border-box;
    display: flex;
    align-items: stretch;
    background: #e6e6e6;
    border-top: 1px solid #9e9e9e;
    border-bottom: 1px solid #d2d0ce;
    font-size: 9.5px;
    color: #555;
`

const TabNav = styled.div`
    flex: none;
    width: 63px;
    box-sizing: border-box;
    padding: 0 7px 0 6px;
    display: flex;
    align-items: center;
    justify-content: space-between;
    font-weight: 700;
    color: #444;
`

const SheetTab = styled.div<{ $active?: boolean; $w: number }>`
    flex: none;
    box-sizing: border-box;
    width: ${({ $w }) => $w}px;
    margin-top: ${({ $active }) => ($active ? "-1px" : "3px")};
    margin-bottom: ${({ $active }) => ($active ? "0" : "3px")};
    display: flex;
    align-items: center;
    justify-content: center;
    white-space: nowrap;
    font-weight: ${({ $active }) => ($active ? 700 : 400)};
    color: ${({ $active }) => ($active ? "#217346" : "#555")};
    background: ${({ $active }) => ($active ? "#f7f7f7" : "transparent")};
    border-bottom: ${({ $active }) => ($active ? "2px solid #217346" : "none")};
    border-right: ${({ $active }) => ($active ? "none" : "1px solid #a8a8a8")};
`

const ClippedTab = styled.div`
    flex: none;
    width: 35px;
    box-sizing: border-box;
    padding-left: 10px;
    overflow: hidden;
    display: flex;
    align-items: center;
    white-space: nowrap;
    color: #444;
`

const TabMore = styled.div`
    flex: none;
    width: 14px;
    margin-left: 5px;
    display: flex;
    align-items: center;
    font-weight: 700;
    color: #444;
`

const AddSheet = styled.div`
    flex: none;
    width: 14px;
    margin-left: 4px;
    display: flex;
    align-items: center;
`

const ScrollBar = styled.div`
    flex: 1;
    margin: 5px 0 4px 1px;
    background: #fff;
    border: 1px solid #bdbdbd;
    border-right: none;
    display: flex;
`

const ScrollButton = styled.div`
    width: 12px;
    display: flex;
    align-items: center;
    justify-content: center;
    background: #f0f0f0;
    border-right: 1px solid #bdbdbd;
`

const StatusBar = styled.footer`
    flex: none;
    height: 18px;
    display: flex;
    align-items: center;
    font-size: 8.8px;
    color: #555;
`

const ReadyText = styled.span`
    margin-left: -9px;
    width: 39px;
`

const MacroSlot = styled.span`
    flex: none;
    width: 13px;
    line-height: 0;
`

const ViewButtons = styled.div`
    margin-left: auto;
    align-self: stretch;
    display: flex;
`

const ViewButton = styled.div<{ $active?: boolean }>`
    width: 31px;
    display: flex;
    align-items: center;
    justify-content: center;
    background: ${({ $active }) => ($active ? "#d2d2d2" : "transparent")};
`

const ZoomSlider = styled.div`
    flex: none;
    width: 46px;
    margin-left: 5px;
    margin-right: -1px;
    display: flex;
    align-items: center;
`

const ZoomMinus = styled.span`
    width: 6px;
    height: 1px;
    background: #555;
`

const ZoomTrack = styled.span`
    flex: 1;
    margin-left: 4px;
    height: 1px;
    background: #aaa;
`

const ZoomThumb = styled.span`
    width: 3px;
    height: 8px;
    background: #555;
`

const Watermark = styled.div`
    position: absolute;
    z-index: 5;
    left: 822px;
    top: 477px;
    white-space: nowrap;
    color: rgba(110, 110, 110, 0.55);
    pointer-events: none;
`

const WatermarkTitle = styled.div`
    font-size: 15.5px;
    line-height: 20px;
`

const WatermarkLine = styled.div`
    font-size: 11px;
    line-height: 16px;
`

export default App
